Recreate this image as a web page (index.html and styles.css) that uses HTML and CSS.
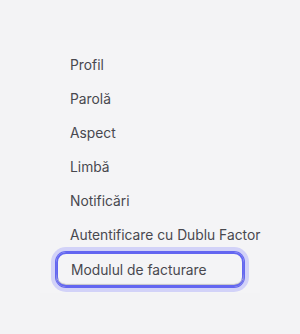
FILE: index.html
```html
<!DOCTYPE html>
<html lang="ro">
<head>
<meta charset="utf-8">
<link rel="stylesheet" href="styles.css">
</head>
<body>
<nav class="panel">
  <a class="item">Profil</a>
  <a class="item">Parolă</a>
  <a class="item">Aspect</a>
  <a class="item">Limbă</a>
  <a class="item">Notificări</a>
  <a class="item">Autentificare cu Dublu Factor</a>
  <a class="item focused">Modulul de facturare</a>
</nav>
</body>
</html>
```
FILE: styles.css
```css
html, body {
  margin: 0;
  padding: 0;
  background: #f3f3f5;
  height: 100%;
}
body {
  font-family: Inter, "Noto Sans", sans-serif;
  padding: 40px 0 0 40px;
  box-sizing: border-box;
}
.panel {
  width: 220px;
  background: #f4f4f6;
  padding: 8px 0 6px 16px;
  box-sizing: border-box;
  display: flex;
  flex-direction: column;
}
.item {
  display: flex;
  align-items: center;
  width: 188px;
  height: 34px;
  box-sizing: border-box;
  padding-left: 14px;
  font-size: 13.8px;
  color: #48484f;
  white-space: nowrap;
  border-radius: 10px;
}
.focused {
  height: 35px;
  padding-left: 15px;
  box-shadow: inset 0 -2px 0 0 #6366f1, inset 0 -3px 1px 0 #c4c4c8,
    inset 0 0 0 2px #6366f1, 0 0 0 1px #6366f1, 0 0 0 5px #d2d2f8;
}
```
